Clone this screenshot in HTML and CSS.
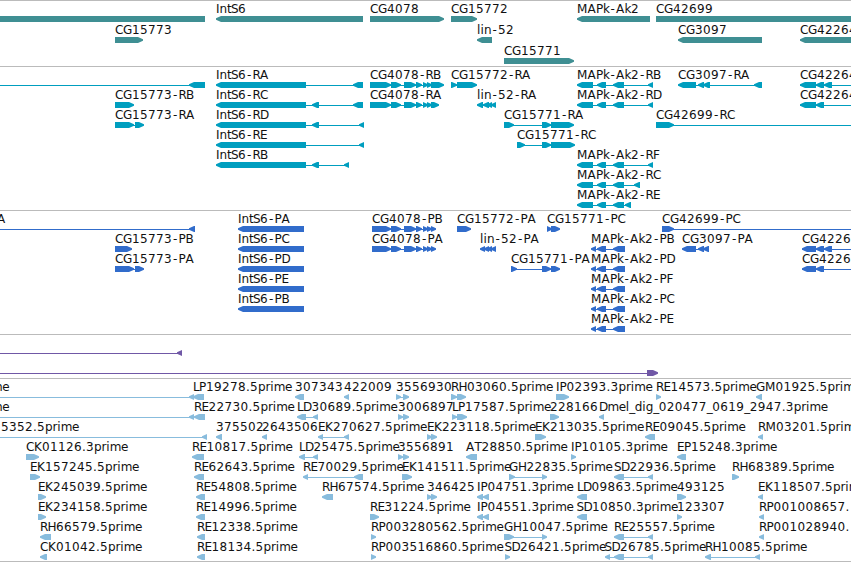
FILE: index.html
```html
<!DOCTYPE html>
<html lang="en">
<head>
<meta charset="utf-8">
<title>Genome region</title>
<link rel="stylesheet" href="styles.css">
</head>
<body>
<main class="browser" id="browser"></main>
<script src="tracks.js"></script>
</body>
</html>
```
FILE: styles.css
```css
body {
  margin: 0;
  background: #fff;
}

.browser {
  display: flex;
  flex-direction: column;
  width: 851px;
  height: 561px;
  overflow: hidden;
  border-bottom: 1px solid #bbb;
}

.track {
  box-sizing: border-box;
  flex: none;
  border-top: 1px solid #bbb;
  overflow: hidden;
}

.track svg {
  display: block;
}

.track text {
  font-family: "DejaVu Sans", "Noto Sans", sans-serif;
  font-size: 12px;
  fill: #111;
}

.track rect {
  shape-rendering: crispEdges;
}

.genes { fill: #3f8f93; }
.transcripts { fill: #009ebf; }
.proteins { fill: #316ccb; }
.alignments { fill: #7058a6; }
.ests { fill: #88bcdd; }
```
FILE: tracks.js
```javascript
// Feature: [row, label, x, parts, lineStart?, lineEnd?]; a part is "<start-end", ">start-end" or "=start-end".
var IR = "<216-306 ";
var MR = "<577-593 <597-606 <613-624 ";
var MP = "<591-596 <597-606 <613-625";
var C4 = ">391-401 >404-416 >416-422 >423-428 >427-432 ";
var tracks = [
  { name: "genes", height: 66, pitch: 21, items: [
    [0, "", 0, "=0-205"], [0, "IntS6", 216, "<216-363"], [0, "CG4078", 370, ">370-444"],
    [0, "CG15772", 451, ">451-477"], [0, "MAPk-Ak2", 577, "<577-650"], [0, "CG42699", 656, "=656-860"],
    [1, "CG15773", 115, ">115-143"], [1, "lin-52", 477, "<477-492"], [1, "CG3097", 678, "<678-762"],
    [1, "CG42264", 800, "<800-860"], [2, "CG15771", 504, ">504-574"]
  ] },
  { name: "transcripts", height: 144, pitch: 20, items: [
    [0, "", 0, "<189-205", 0], [0, "IntS6-RA", 216, IR + "<353-363"],
    [0, "CG4078-RB", 370, ">370-391 " + C4 + ">431-444"], [0, "CG15772-RA", 451, ">451-457 >457-477"],
    [0, "MAPk-Ak2-RB", 577, MR + "<648-653"], [0, "CG3097-RA", 678, "<678-696 <698-704 <703-710 <754-762"],
    [0, "CG42264", 800, "<800-816 <816-824 <824-832", 800, 860],
    [1, "CG15773-RB", 115, ">115-134"], [1, "IntS6-RC", 216, IR + "<312-319 <353-363"],
    [1, "CG4078-RA", 370, ">370-391 " + C4 + ">431-439"], [1, "lin-52-RA", 477, "<477-483 <483-489 <487-492 <491-496"],
    [1, "MAPk-Ak2-RD", 577, MR + "<648-653"], [1, "CG42264", 800, "<800-816 <816-824", 800, 860],
    [2, "CG15773-RA", 115, ">115-134 >135-144"], [2, "IntS6-RD", 216, IR + "<312-319 <359-364"],
    [2, "CG15771-RA", 504, ">504-514 >542-551 >551-574"], [2, "CG42699-RC", 656, ">656-674", 656, 860],
    [3, "IntS6-RE", 216, IR + "<359-364"], [3, "CG15771-RC", 517, ">517-525 >542-551 >551-575"],
    [4, "IntS6-RB", 216, IR + "<312-319 <344-349"], [4, "MAPk-Ak2-RF", 577, MR + "<648-653"],
    [5, "MAPk-Ak2-RC", 577, MR + "<634-640"], [6, "MAPk-Ak2-RE", 577, MR + "<625-631"]
  ] },
  { name: "proteins", height: 124, pitch: 20, items: [
    [0, "A", -3, "<189-195", 0], [0, "IntS6-PA", 238, "<238-304"],
    [0, "CG4078-PB", 372, ">372-391 " + C4 + ">431-436"], [0, "CG15772-PA", 457, ">457-471"],
    [0, "CG15771-PC", 547, ">547-552 >551-560"], [0, "CG42699-PC", 662, ">662-674", 662, 860],
    [1, "CG15773-PB", 115, ">115-132"], [1, "IntS6-PC", 238, "<238-304"],
    [1, "CG4078-PA", 372, ">372-391 " + C4 + ">431-436"], [1, "lin-52-PA", 480, "<480-485 <484-489 <487-492 <491-496"],
    [1, "MAPk-Ak2-PB", 591, MP], [1, "CG3097-PA", 682, "<682-696 <698-704 <703-709"],
    [1, "CG4226", 802, "<802-816 <816-824 <824-832", 802, 860],
    [2, "CG15773-PA", 115, ">115-134 >135-144"], [2, "IntS6-PD", 238, "<238-304"],
    [2, "CG15771-PA", 511, ">511-517 >542-551 >551-560"], [2, "MAPk-Ak2-PD", 591, MP],
    [2, "CG4226", 802, "<802-816 <816-824", 802, 860],
    [3, "IntS6-PE", 238, "<238-304"], [3, "MAPk-Ak2-PF", 591, MP],
    [4, "IntS6-PB", 238, "<238-304"], [4, "MAPk-Ak2-PC", 591, MP], [5, "MAPk-Ak2-PE", 591, MP]
  ] },
  { name: "alignments", height: 44, pitch: 20, items: [
    [0, "", 0, "<177-182", 0], [1, "", 0, ">647-658", 0]
  ] },
  { name: "ests", height: 183, pitch: 20, items: [
    [0, "me", -9, "<189-194", 0], [0, "LP19278.5prime", 193, "<193-204"], [0, "307343", 295, "<295-304"],
    [0, "422009", 344, "<344-349"], [0, "3556930", 396, ">396-401 >403-409"],
    [0, "RH03060.5prime", 451, ">451-457 >457-466"], [0, "IP02393.3prime", 556, ">556-569"],
    [0, "RE14573.5prime", 656, ">656-661"], [0, "GM01925.5prime", 756, "<756-762"],
    [1, "me", -9, "<189-194", 0], [1, "RE22730.5prime", 194, "<194-205"], [1, "LD30689.5prime", 297, "<297-306 <313-318"],
    [1, "3006897", 398, ">398-403 >403-409"], [1, "LP17587.5prime", 452, ">452-457 >457-467"],
    [1, "228166", 550, ">550-559"], [1, "Dmel_dig_020477_0619_2947.3prime", 599, "<599-604"],
    [2, "5352.5prime", 1, "<202-207", 0], [2, "375502", 216, "<216-222"], [2, "2643506", 262, "<262-267"],
    [2, "EK270627.5prime", 318, "<318-323 <344-349"], [2, "EK223118.5prime", 427, ">427-432 >431-437"],
    [2, "EK213035.5prime", 535, ">535-546"], [2, "RE09045.5prime", 645, "<645-655"], [2, "RM03201.5prime", 758, "<758-763"],
    [3, "CK01126.3prime", 26, ">26-39"], [3, "RE10817.5prime", 192, "<192-204"], [3, "LD25475.5prime", 299, "<299-305 <313-318"],
    [3, "3556891", 398, ">398-403 >403-409"], [3, "AT28850.5prime", 466, "<466-477"],
    [3, "IP10105.3prime", 571, ">571-576"], [3, "EP15248.3prime", 677, "<677-686"],
    [4, "EK157245.5prime", 30, ">30-40"], [4, "RE62643.5prime", 194, "<194-204"], [4, "RE70029.5prime", 303, "<303-308 <354-363"],
    [4, "EK141511.5prime", 402, ">402-412"], [4, "GH22835.5prime", 509, ">509-515 >542-547"],
    [4, "SD22936.5prime", 614, "<614-624 <648-653"], [4, "RH68389.5prime", 732, ">732-739"],
    [5, "EK245039.5prime", 38, ">38-46"], [5, "RE54808.5prime", 196, "<196-205"], [5, "RH67574.5prime", 322, "<322-333"],
    [5, "346425", 427, ">427-432 >431-437"], [5, "IP04751.3prime", 477, "<477-483 <483-489"],
    [5, "LD09863.5prime", 577, "<577-587"], [5, "493125", 677, ">677-686"], [5, "EK118507.5prime", 758, "<758-763"],
    [6, "EK234158.5prime", 38, ">38-46"], [6, "RE14996.5prime", 196, "<196-205"], [6, "RE31224.5prime", 370, ">370-379"],
    [6, "IP04551.3prime", 477, "<477-483 <483-489"], [6, "SD10850.3prime", 576.5, "<577-587"],
    [6, "123307", 677, ">677-682"], [6, "RP001008657.", 759, "<759-764"],
    [7, "RH66579.5prime", 40, "<40-51"], [7, "RE12338.5prime", 197, "<197-205"], [7, "RP003280562.5prime", 371, ">371-376"],
    [7, "GH10047.5prime", 504, ">504-514 >542-547"], [7, "RE25557.5prime", 614, "<614-624 <648-653"],
    [7, "RP001028940.", 759, "<759-764"],
    [8, "CK01042.5prime", 40, "<40-47"], [8, "RE18134.5prime", 197, "<197-205"], [8, "RP003516860.5prime", 371, ">371-376"],
    [8, "SD26421.5prime", 504.5, ">505-510"], [8, "SD26785.5prime", 604.5, "<605-610 <614-624 <648-653"],
    [8, "RH10085.5prime", 705, "<705-711 <755-760"]
  ] }
];

// Advance widths of the label characters; digits take 8px.
var advance = {
  A: 8.5, B: 7, C: 8, D: 8.5, E: 7, G: 9, H: 8.5, I: 3.5, K: 8, L: 6, M: 10.5, P: 7, R: 7.5, S: 7, T: 7,
  "-": 6.5, ".": 4, _: 5.5, d: 7.5, e: 7, g: 7.5, i: 3.5, k: 6.5, l: 3.5, m: 11.2, n: 7.5, p: 7.5, r: 4.8, t: 4
};

function label(text, x, y) {
  var xs = [], at = x;
  for (var i = 0; i < text.length; i++) {
    // The hyphen is narrower than its cell, so it is centred in it.
    xs.push(text[i] === "-" ? at + 1 : at);
    at += advance[text[i]] || 8;
  }
  return '<text x="' + xs.join(" ") + '" y="' + y + '">' + text + "</text>";
}

function part(dir, a, b, y) {
  if (dir === "=") return '<rect x="' + a + '" y="' + y + '" width="' + (b - a) + '" height="6"/>';
  var h = Math.min(5, b - a), s = dir === "<" ? 1 : -1;
  var tip = s > 0 ? a : b, tail = s > 0 ? b : a, neck = tip + s * h;
  return '<path d="M' + tip + " " + (y + 2.2) + "L" + neck + " " + y + "H" + tail + "V" + (y + 6) +
    "H" + neck + "L" + tip + " " + (y + 3.8) + 'Z"/>';
}

document.getElementById("browser").innerHTML = tracks.map(function (track) {
  var shapes = track.items.map(function (item) {
    var y = 15 + item[0] * track.pitch;
    var parts = item[3].trim().split(/ +/).map(function (p) {
      var ends = p.slice(1).split("-");
      return [p[0], +ends[0], +ends[1]];
    });
    var from = item[4] === undefined ? parts[0][1] + 2 : item[4];
    var to = item[5] === undefined ? parts[parts.length - 1][2] - 2 : item[5];
    return '<rect x="' + from + '" y="' + (y + 3) + '" width="' + (to - from) + '" height="1"/>' +
      parts.map(function (p) { return part(p[0], p[1], p[2], y); }).join("") +
      (item[1] ? label(item[1], item[2], y - 3) : "");
  }).join("");
  return '<section class="track ' + track.name + '" style="height:' + track.height + 'px">' +
    '<svg width="851" height="' + (track.height - 1) + '">' + shapes + "</svg></section>";
}).join("");
```
